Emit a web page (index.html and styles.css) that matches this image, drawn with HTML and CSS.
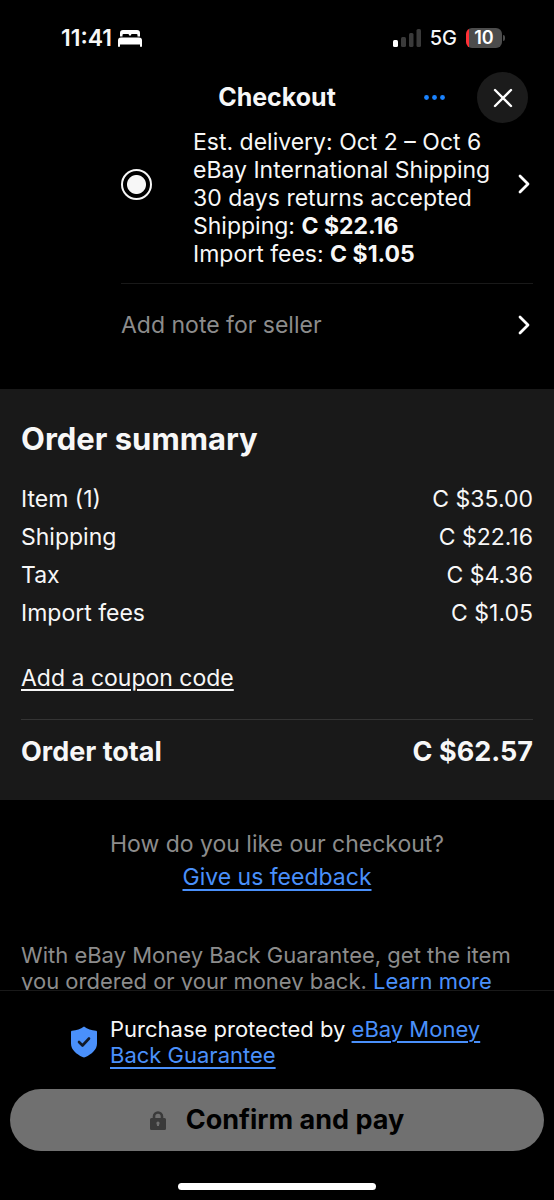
FILE: index.html
```html
<!DOCTYPE html>
<html lang="en">
<head>
<meta charset="utf-8">
<meta name="viewport" content="width=device-width, initial-scale=1">
<title>Checkout</title>
<link rel="stylesheet" href="styles.css">
</head>
<body>
<div class="app">
  <div class="status">
    <div class="status-side">
      <span class="clock">11:41</span>
      <svg width="24" height="17" viewBox="0 0 24 17" fill="#fff" aria-hidden="true"><path d="M2 6.500V3a3 3 0 0 1 3-3h14a3 3 0 0 1 3 3v3.500h-2.500V5a1 1 0 0 0-1-1H14a1 1 0 0 0-1 1v.5h-2V5a1 1 0 0 0-1-1H5.500a1 1 0 0 0-1 1v1.500z"/><path d="M3 7.500h18a3 3 0 0 1 3 3V16a1 1 0 0 1-2 0v-1.500H2V16a1 1 0 0 1-2 0v-5.500a3 3 0 0 1 3-3z"/></svg>
    </div>
    <div class="status-side status-right">
      <svg width="28" height="18" viewBox="0 0 28 18" fill="#3a3a3a" aria-hidden="true"><rect y="11" width="5" height="7" rx="1.500" fill="#fff"/><rect x="8" y="8" width="5" height="10" rx="1.500"/><rect x="16" y="4" width="4.500" height="14" rx="1.500"/><rect x="23.500" width="4.500" height="18" rx="1.500"/></svg>
      <span class="network">5G</span>
      <span class="battery"><span class="battery-body">10</span><span class="battery-tip"></span></span>
    </div>
  </div>

  <header class="header">
    <h1 class="title">Checkout</h1>
    <div class="actions">
      <button class="more" type="button" aria-label="More options"><svg width="21" height="5" viewBox="0 0 21 5" fill="#1a83ff"><circle cx="2.500" cy="2.500" r="2.400"/><circle cx="10.500" cy="2.500" r="2.400"/><circle cx="18.500" cy="2.500" r="2.400"/></svg></button>
      <button class="close" type="button" aria-label="Close"><svg width="20" height="20" viewBox="0 0 20 20" fill="none" stroke="#fff" stroke-width="2.400" stroke-linecap="round"><path d="M2 2l16 16M18 2L2 18"/></svg></button>
    </div>
  </header>

  <main class="content">
    <section class="seller">
      <div class="option">
        <input class="radio" type="radio" name="shipping" id="ship" checked>
        <label class="details" for="ship">Est. delivery: Oct 2 – Oct 6<br>eBay International Shipping<br>30 days returns accepted<br>Shipping: <b>C $22.16</b><br>Import fees: <b>C $1.05</b></label>
        <button class="chevron" type="button" aria-label="Shipping details"><svg width="12" height="20" viewBox="0 0 12 20" fill="none" stroke="#fff" stroke-width="2.800" stroke-linecap="round" stroke-linejoin="round"><path d="M2 2l8 8-8 8"/></svg></button>
      </div>
      <button class="note" type="button">
        <span>Add note for seller</span>
        <svg width="12" height="20" viewBox="0 0 12 20" fill="none" stroke="#fff" stroke-width="2.800" stroke-linecap="round" stroke-linejoin="round" aria-hidden="true"><path d="M2 2l8 8-8 8"/></svg>
      </button>
    </section>

    <section class="summary">
      <h2 class="heading">Order summary</h2>
      <dl class="rows">
        <div class="row"><dt>Item (1)</dt><dd>C $35.00</dd></div>
        <div class="row"><dt>Shipping</dt><dd>C $22.16</dd></div>
        <div class="row"><dt>Tax</dt><dd>C $4.36</dd></div>
        <div class="row"><dt>Import fees</dt><dd>C $1.05</dd></div>
      </dl>
      <a class="coupon" href="#">Add a coupon code</a>
      <div class="total"><span>Order total</span><span>C $62.57</span></div>
    </section>

    <section class="feedback">
      <p>How do you like our checkout?</p>
      <a class="link" href="#">Give us feedback</a>
    </section>
    <p class="guarantee">With eBay Money Back Guarantee, get the item you ordered or your money back. <a href="#">Learn more</a></p>
  </main>

  <footer class="footer">
    <div class="protect">
      <svg class="shield" width="26" height="32" viewBox="0 0 26 32" aria-hidden="true"><path fill="#4a90fb" d="M13 .5c3.500 2.500 7.500 4 12 4.300q1 .1 1 1.200v11.500c0 6.500-5.500 10.500-11.500 13.600q-1.500.7-3 0C5.500 28 0 24 0 17.500V6q0-1.100 1-1.200C5.500 4.500 9.500 3 13 .5z"/><path d="M8 16l3.500 3.500L18 12.500" fill="none" stroke="#111a2a" stroke-width="2.600" stroke-linecap="round" stroke-linejoin="round"/></svg>
      <p class="protect-text">Purchase protected by <a class="link" href="#">eBay Money Back Guarantee</a></p>
    </div>
    <button class="pay" type="button" disabled>
      <svg width="16" height="19" viewBox="0 0 16 19" aria-hidden="true"><path d="M4 8V5.500a4 4 0 0 1 8 0V8" fill="none" stroke="#3a3a3a" stroke-width="2.600"/><path fill="#3a3a3a" fill-rule="evenodd" d="M1.500 7h13A1.500 1.500 0 0 1 16 8.500v9a1.500 1.500 0 0 1-1.500 1.500h-13A1.500 1.500 0 0 1 0 17.500v-9A1.500 1.500 0 0 1 1.500 7zM8 10.500a1.600 1.600 0 0 0-1.600 1.600c0 1 .6 1.400.6 2.900h2c0-1.500.6-1.900.6-2.900A1.600 1.600 0 0 0 8 10.500z"/></svg>
      <span>Confirm and pay</span>
    </button>
    <div class="home"></div>
  </footer>
</div>
</body>
</html>
```
FILE: styles.css
```css
* { box-sizing: border-box; }
body { margin: 0; background: #000; color: #f7f7f7; font: 23px/28px Inter, "Open Sans", sans-serif; }
h1, h2, p, dl, dd { margin: 0; }
button { padding: 0; border: 0; background: none; color: inherit; font: inherit; }
svg { display: block; flex: none; }

.app { display: flex; flex-direction: column; height: 100vh; }

.status { display: flex; justify-content: space-between; align-items: center; flex: none; height: 72px; padding: 4px 49px 0 61px; }
.status-side { display: flex; align-items: center; gap: 6px; font-weight: 600; font-size: 23px; }
.status-right { gap: 9px; }
.network { font-weight: 500; font-size: 20px; }
.battery { display: flex; align-items: center; gap: 1px; }
.battery-body { width: 36px; height: 20px; border-radius: 6px; background: linear-gradient(90deg, #ff3036 3px, #4c4c4c 3px); color: #fff; font-size: 18px; line-height: 20px; text-align: center; }
.battery-tip { width: 2px; height: 6px; border-radius: 0 2px 2px 0; background: #4c4c4c; }

.header { display: grid; grid-template-columns: 1fr auto 1fr; align-items: center; flex: none; height: 51px; padding: 0 26px; }
.title { grid-column: 2; padding-bottom: 2px; font-size: 25px; line-height: 32px; font-weight: 700; }
.actions { display: flex; justify-content: flex-end; align-items: center; gap: 32px; }
.close { display: grid; place-items: center; width: 51px; height: 51px; border-radius: 50%; background: #1b1b1b; }

.content { flex: 1; min-height: 0; overflow: hidden; }
.seller { padding: 5px 21px 0 121px; }
.option { display: flex; align-items: center; padding-bottom: 15px; border-bottom: 1px solid #191919; }
.radio { appearance: none; flex: none; width: 31px; height: 31px; margin: 0 41px 28px 0; border: 2px solid #f7f7f7; border-radius: 50%; background: radial-gradient(circle, #f7f7f7 9px, transparent 10px); }
.details { flex: 1; white-space: nowrap; }
.chevron { margin: 0 3px 28px 0; }
.note { display: flex; justify-content: space-between; align-items: center; width: 100%; height: 105px; padding: 0 3px 24px 0; color: #8c8c8c; }

.summary { padding: 30px 21px; background: #191919; }
.heading { margin-bottom: 21px; font-size: 31px; line-height: 40px; font-weight: 700; }
.row { display: flex; justify-content: space-between; line-height: 38px; }
.coupon { display: inline-block; margin: 32px 0 27px; color: inherit; text-decoration-thickness: 2px; text-underline-offset: 3px; }
.total { display: flex; justify-content: space-between; padding-top: 14px; border-top: 1px solid #343434; font-size: 27px; line-height: 36px; font-weight: 700; }

.feedback { padding: 28px 21px 0; text-align: center; line-height: 33px; color: #8c8c8c; }
.link { color: #4a90fb; text-decoration-thickness: 2px; text-underline-offset: 4px; }
.guarantee { padding: 48px 21px 0; color: #8c8c8c; font-size: 22px; line-height: 26px; }
.guarantee a { color: #4a90fb; text-decoration: none; }

.footer { display: flex; flex-direction: column; flex: none; padding: 25px 10px 10px; border-top: 1px solid #191919; background: #000; }
.protect { display: flex; justify-content: center; align-items: center; gap: 13px; padding: 0 61px; }
.protect-text { flex: 1; font-size: 22px; line-height: 26px; }
.pay { display: flex; justify-content: center; align-items: center; gap: 20px; height: 62px; margin-top: 21px; border-radius: 31px; background: #707070; color: #000; font-size: 27px; font-weight: 700; }
.home { align-self: center; width: 37%; height: 7px; margin-top: 32px; border-radius: 4px; background: #fff; }
```
